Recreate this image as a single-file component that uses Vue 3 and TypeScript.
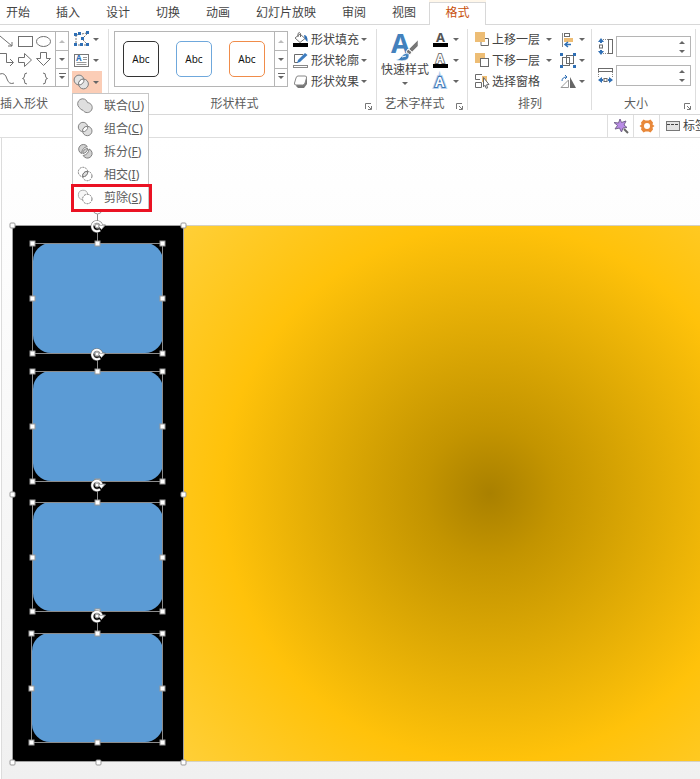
<script setup lang="ts">
interface Frame { x: number; y: number; w: number; h: number }

const tabs = ['开始', '插入', '设计', '切换', '动画', '幻灯片放映', '审阅', '视图', '格式']
const activeTab = '格式'

const styleColors = ['#333333', '#6fa8dc', '#f08c4a']

const fillTools = [
  { icon: 'fill', label: '形状填充' },
  { icon: 'outline', label: '形状轮廓' },
  { icon: 'effect', label: '形状效果' },
]

const textTools = [
  { icon: 'textFill', label: '文本填充' },
  { icon: 'textOutline', label: '文本轮廓' },
  { icon: 'textEffect', label: '文本效果' },
]

const layerTools = [
  { icon: 'forward', label: '上移一层', arrow: true },
  { icon: 'backward', label: '下移一层', arrow: true },
  { icon: 'pane', label: '选择窗格', arrow: false },
]

const arrangeTools = [
  { icon: 'align', label: '对齐' },
  { icon: 'group', label: '组合对象' },
  { icon: 'rotate', label: '旋转' },
]

const mergeItems = [
  { icon: 'union', label: '联合', key: 'U' },
  { icon: 'combine', label: '组合', key: 'C' },
  { icon: 'fragment', label: '拆分', key: 'F' },
  { icon: 'intersect', label: '相交', key: 'I' },
  { icon: 'subtract', label: '剪除', key: 'S' },
]

const frames: Frame[] = [
  { x: 33, y: 18, w: 130, h: 110 },
  { x: 33, y: 146, w: 130, h: 110 },
  { x: 33, y: 277, w: 130, h: 109 },
  { x: 32, y: 408, w: 131, h: 109 },
]
const outer: Frame = { x: 13, y: 0, w: 171, h: 537 }

function handles(f: Frame): [number, number][] {
  const xs = [f.x, f.x + Math.ceil(f.w / 2), f.x + f.w]
  const ys = [f.y, f.y + Math.ceil(f.h / 2), f.y + f.h]
  const points: [number, number][] = []
  ys.forEach((y, r) => xs.forEach((x, c) => { if (r !== 1 || c !== 1) points.push([x, y]) }))
  return points
}

const g = 'fill="none" stroke="#6b6b6b"'
const icons: Record<string, string> = {
  edit: `<path d="M3 4 14 2M3 4v10h12L9 8l5-5" fill="none" stroke="#777" stroke-dasharray="2 1"/><g fill="#2f6fb5"><rect x="1" y="2" width="3" height="3"/><rect x="5" y="1" width="3" height="3"/><rect x="13" y="0" width="3" height="3"/><rect x="8" y="6" width="3" height="3"/><rect x="1" y="12" width="3" height="3"/><rect x="7" y="12" width="3" height="3"/><rect x="13" y="12" width="3" height="3"/></g>`,
  textbox: `<rect x="1.500" y="2.500" width="14" height="12" fill="#fff" stroke="#777"/><text x="3" y="9" font-size="8" font-weight="700" fill="#2f6fb5">A</text><path d="M10 5.500h4M10 7.500h4M3.500 10.500h10M3.500 12.500h10" stroke="#999"/>`,
  merge: `<circle cx="6" cy="6" r="4.900" fill="#e3e3e3" stroke="#7d7d7d"/><circle cx="10.500" cy="10" r="4.900" fill="#e3e3e3" stroke="#7d7d7d"/><path d="M5.600 10.900A4.900 4.900 0 0 1 10.900 5.100A4.900 4.900 0 0 1 5.600 10.900Z" fill="#fff" stroke="#7d7d7d"/>`,
  union: `<path d="M2.400 9.600A5 5 0 1 1 10.500 4.600A5 5 0 1 1 6 12.300A5 5 0 0 1 2.400 9.600Z" fill="#dedede" stroke="#858585"/>`,
  combine: `<circle cx="6" cy="6" r="4.700" fill="#dedede" stroke="#858585"/><circle cx="10.300" cy="10" r="4.700" fill="#dedede" stroke="#858585"/><path d="M5.600 10.700A4.700 4.700 0 0 1 10.700 5.400A4.700 4.700 0 0 1 5.600 10.700Z" fill="#fff" stroke="#858585"/>`,
  fragment: `<path d="M4.500 10.500A4.700 4.700 0 1 1 10.300 3.600Q5.200 4.500 4.500 10.500ZM12 6A4.700 4.700 0 1 1 6.200 12.500Q11.500 11.500 12 6Z" fill="#d2d2d2" stroke="#808080"/><path d="M5.800 10.600Q5.600 6.500 10.600 5.300Q10.600 9.500 5.800 10.600Z" fill="#d2d2d2" stroke="#808080"/>`,
  intersect: `<circle cx="6" cy="6" r="4.700" fill="none" stroke="#777" stroke-dasharray="2 1"/><circle cx="10.300" cy="10" r="4.700" fill="none" stroke="#777" stroke-dasharray="2 1"/><path d="M5.600 10.700A4.700 4.700 0 0 1 10.700 5.400A4.700 4.700 0 0 1 5.600 10.700Z" fill="#ddd" stroke="#777"/>`,
  subtract: `<path d="M5.500 10.600A4.700 4.700 0 1 1 10.700 5.300" fill="#f6f6f6" stroke="#b0b0b0"/><circle cx="10.300" cy="10" r="4.700" fill="#fff" stroke="#777" stroke-dasharray="2 1"/>`,
  fill: `<path d="m2 6 5-4 5 4.500-5 4Z" fill="#fff" stroke="#777"/><path d="M5 5V1.500q1.500-2 2.500 0V5" ${g}/><path d="M11 3q4 0 3.500 7-2-1-3-4.500Z" fill="#2f6fb5"/><rect y="11" width="15" height="4" fill="#000"/>`,
  outline: `<path d="M10 1.500H1.500v8H5" ${g}/><path d="m4 10 1-3 7-7 2.500 2-7.500 7Z" fill="#3d7cbf"/><rect x=".5" y="12.500" width="14" height="2" fill="#fff" stroke="#888"/>`,
  effect: `<path d="M3 12 7 3h6l1 2v5l-3 4H5Z" fill="#777"/><path d="M5 2h7q2 0 1.500 2L12 9q-.5 2-2.500 2H3Q1 11 1.500 9L3 4q.5-2 2-2Z" fill="#fff" stroke="#888"/>`,
  quick: `<text x="0" y="20" font-size="27" font-weight="700" fill="#4381bd">A</text><path d="M27 7v6l-6 6-3-3Z" fill="#777" stroke="#fff" stroke-width=".5"/><path d="m17 16 4 3-2 3-4-3Z" fill="#777" stroke="#fff"/><path d="M5 27q4-1 6-4 3-4 7-2 1 9-13 6Z" fill="#3f80bd" stroke="#fff" stroke-width=".5"/><path d="m11 24 4-1" stroke="#fff"/>`,
  textFill: `<text x="3" y="10" font-size="13" font-weight="700" fill="#555">A</text><rect y="11" width="15" height="4" fill="#000"/>`,
  textOutline: `<text x="3" y="10" font-size="12" font-weight="600" fill="#fff" stroke="#777" stroke-width="2" paint-order="stroke">A</text><rect y="11" width="15" height="4" fill="#000"/>`,
  textEffect: `<text x="2" y="13" font-size="14" font-weight="600" fill="#fff" stroke="#b7d2f0" stroke-width="4" paint-order="stroke">A</text><text x="2" y="13" font-size="14" font-weight="600" fill="#fff" stroke="#3f79b7" stroke-width="2" paint-order="stroke">A</text>`,
  forward: `<path d="M10 6.500h3.500v7H6V10" ${g}/><rect width="10" height="10" fill="#edbd75"/>`,
  backward: `<rect width="10" height="10" fill="#edbd75"/><rect x="5.500" y="5.500" width="8" height="8" fill="#fff" stroke="#6b6b6b"/>`,
  pane: `<path d="M7 .5H.5v5H5M.5 8.500h6v5h-6Z" ${g}/><path d="M7 2h5v6H7Z" fill="#edbd75"/><path d="m8.500 3.500 5.500 7-2.500.3 1.200 3-1.500.5-1.200-3-1.500 1.500Z" fill="#fff" stroke="#666"/>`,
  align: `<path d="M2.500 1v14" stroke="#888"/><rect x="4.500" y="1.500" width="5" height="3" ${g}/><rect x="4" y="6" width="9" height="4" fill="#edbd75"/><path d="M11 12.500H6M8 10l-3 2.500L8 15" fill="none" stroke="#2f6fb5" stroke-width="1.500"/>`,
  group: `<g ${g}><rect x="2.500" y="4.500" width="7" height="8"/><rect x="6.500" y="2.500" width="7" height="8"/></g><path d="M0 0h3v3H0ZM13 0h3v3h-3ZM0 12h3v3H0ZM13 12h3v3h-3Z" fill="#2f6fb5"/>`,
  rotate: `<path d="M1 13.500h7.500V6Z" fill="#fff" stroke="#999"/><path d="M10 14V3l6 11Z" fill="#666"/><path d="M2 7q0-4 5-4M5 1l2 2-2 2" fill="none" stroke="#2f6fb5"/>`,
  height: `<rect x="11.500" y="1.500" width="4" height="14" ${g}/><path d="M6 1.500h5M6 15.500h5" stroke="#888" stroke-dasharray="1 1"/><path d="m4 0 3 4H5v1H3V4H1ZM4 17l3-4H5v-1H3v1H1Z" fill="#2f6fb5"/><rect x="2.500" y="7" width="3" height="3" ${g}/>`,
  width: `<rect x="1.500" y="1.500" width="14" height="3" ${g}/><path d="M1.500 5v5M15.500 5v5" stroke="#888" stroke-dasharray="1 1"/><path d="m1 13 4-3v2h1v2H5v2ZM16 13l-4-3v2h-1v2h1v2Z" fill="#2f6fb5"/><rect x="7" y="11.500" width="3" height="3" ${g}/>`,
  wand: `<path d="m7 1 1.500 3.500L13 3l-2 4 3 2.500-4 .5-1.500 4L6.500 10 2 11l2.500-3.500L1 4.500l4.500.5Z" fill="#b98be6" stroke="#75638c"/><path d="m11 11 4 4" stroke="#666" stroke-width="2"/>`,
  gear: `<path d="m4.500 1.500 2 1h3l2-1 2.500 3-.5 2L15.500 8l-2 1.500.5 2-2.500 3-2-1h-3l-2 1-2.500-3 .5-2L.5 8l2-1.500-.5-2Z" fill="#e8883a"/><circle cx="8" cy="8" r="3" fill="#fff"/>`,
  label: `<rect x="1.500" y="3.500" width="13" height="9" fill="#e4e4e4" stroke="#777"/><path d="M2 6.500h12" stroke="#444" stroke-dasharray="3 1"/>`,
}
</script>

<template>
  <div class="app">
    <nav class="tabs">
      <a v-for="t in tabs" :key="t" href="#" class="tab" :class="{ active: t === activeTab }">{{ t }}</a>
    </nav>

    <header class="ribbon">
      <section class="panel insert">
        <div class="body">
          <div class="gallery shapes">
            <svg class="shape-grid" viewBox="0 0 55 54" fill="none" stroke="#707070">
              <path d="M0 4 12 14M12 10v4H8" />
              <rect x="18.500" y="4.500" width="14" height="10" />
              <ellipse cx="43.500" cy="9.500" rx="7" ry="5" />
              <path d="M0 21.500h6.500v9H13M10 27l3.500 3.500L10 34" />
              <path d="M18.500 25.500h6v-4l7 6.500-7 6.500v-4h-6ZM40.500 20.500h6v6h4l-7 7-7-7h4Z" />
              <path d="M0 42q5-2 7 5 2 6 7 4" />
              <path d="M27 41q-3 0-2.500 3 0 2-2 2.500 2 0 2 2.500-.5 3 2.500 3M43 41q3 0 2.500 3 0 2 2 2.500-2 0-2 2.500.5 3-2.500 3" />
            </svg>
            <div class="scroller">
              <button aria-label="向上"><i class="up" /></button>
              <button aria-label="向下"><i class="down" /></button>
              <button aria-label="更多"><i class="down more" /></button>
            </div>
          </div>
          <div class="stack edit-tools">
            <button class="tool" aria-label="编辑形状"><svg class="icon" viewBox="0 0 17 17" v-html="icons.edit" /><i class="down" /></button>
            <button class="tool" aria-label="文本框"><svg class="icon" viewBox="0 0 17 17" v-html="icons.textbox" /><i class="down" /></button>
            <div class="merge">
              <button class="tool open" aria-label="合并形状" aria-expanded="true"><svg class="icon" viewBox="0 0 17 17" v-html="icons.merge" /><i class="down" /></button>
              <div class="menu" role="menu">
                <button v-for="m in mergeItems" :key="m.key" class="item" :class="{ marked: m.key === 'S' }" role="menuitem">
                  <svg class="icon" viewBox="0 0 17 17" v-html="icons[m.icon]" />
                  <span>{{ m.label }}(<u>{{ m.key }}</u>)</span>
                </button>
              </div>
            </div>
          </div>
        </div>
        <h2 class="caption">插入形状</h2>
      </section>

      <section class="panel styles">
        <div class="body">
          <div class="gallery presets">
            <div class="swatches">
              <button v-for="c in styleColors" :key="c" class="swatch" :style="{ borderColor: c }">Abc</button>
            </div>
            <div class="scroller">
              <button aria-label="向上"><i class="up" /></button>
              <button aria-label="向下"><i class="down" /></button>
              <button aria-label="更多"><i class="down more" /></button>
            </div>
          </div>
          <div class="stack">
            <button v-for="t in fillTools" :key="t.icon" class="tool shape-tool">
              <svg class="icon small" viewBox="0 0 16 16" v-html="icons[t.icon]" /><span>{{ t.label }}</span><i class="down" />
            </button>
          </div>
        </div>
        <h2 class="caption">形状样式</h2>
        <button class="launcher" aria-label="形状样式选项"><svg viewBox="0 0 7 7" fill="none" stroke="#777"><path d="M6 .5H.5V6M3 3l3 3M6.500 3v3.500H3" /></svg></button>
      </section>

      <section class="panel wordart">
        <div class="body">
          <button class="quick">
            <svg class="quick-icon" viewBox="0 0 28 29" v-html="icons.quick" />
            <span>快速样式</span>
            <i class="down" />
          </button>
          <div class="stack">
            <button v-for="t in textTools" :key="t.icon" class="tool spaced" :aria-label="t.label">
              <svg class="icon small" viewBox="0 0 16 16" v-html="icons[t.icon]" /><i class="down" />
            </button>
          </div>
        </div>
        <h2 class="caption">艺术字样式</h2>
        <button class="launcher" aria-label="艺术字样式选项"><svg viewBox="0 0 7 7" fill="none" stroke="#777"><path d="M6 .5H.5V6M3 3l3 3M6.500 3v3.500H3" /></svg></button>
      </section>

      <section class="panel arrange">
        <div class="body">
          <div class="stack">
            <button v-for="t in layerTools" :key="t.icon" class="tool layer">
              <svg class="icon small" viewBox="0 0 16 16" v-html="icons[t.icon]" /><span>{{ t.label }}</span><i v-if="t.arrow" class="down" />
            </button>
          </div>
          <div class="stack">
            <button v-for="t in arrangeTools" :key="t.icon" class="tool" :aria-label="t.label">
              <svg class="icon small" viewBox="0 0 16 16" v-html="icons[t.icon]" /><i class="down" />
            </button>
          </div>
        </div>
        <h2 class="caption">排列</h2>
      </section>

      <section class="panel size">
        <div class="body">
          <label class="field">
            <svg class="icon" viewBox="0 0 17 17" v-html="icons.height" />
            <span class="spin"><input type="text" aria-label="高度"><span class="steps"><i class="up dark" /><i class="down" /></span></span>
          </label>
          <label class="field">
            <svg class="icon" viewBox="0 0 17 17" v-html="icons.width" />
            <span class="spin"><input type="text" aria-label="宽度"><span class="steps"><i class="up dark" /><i class="down" /></span></span>
          </label>
        </div>
        <h2 class="caption">大小</h2>
        <button class="launcher" aria-label="大小选项"><svg viewBox="0 0 7 7" fill="none" stroke="#777"><path d="M6 .5H.5V6M3 3l3 3M6.500 3v3.500H3" /></svg></button>
      </section>
    </header>

    <div class="quickbar">
      <button class="quick-cell" aria-label="美化"><svg class="icon small" viewBox="0 0 16 16" v-html="icons.wand" /></button>
      <button class="quick-cell" aria-label="设置"><svg class="icon small" viewBox="0 0 16 16" v-html="icons.gear" /></button>
      <button class="quick-cell wide"><svg class="icon small" viewBox="0 0 16 16" v-html="icons.label" /><span>标签</span></button>
    </div>

    <main class="stage">
      <div class="slide">
        <div class="film" />
        <div class="backdrop" />
        <svg class="selection" viewBox="0 -20 200 567" fill="none">
          <rect v-for="f in frames" :key="f.y" :x="f.x" :y="f.y" :width="f.w" :height="f.h" rx="18" fill="#5b9bd5" />
          <g stroke="#8c8c8c">
            <rect v-for="f in frames" :key="f.y" :x="f.x - 0.5" :y="f.y + 0.5" :width="f.w" :height="f.h" />
            <rect :x="outer.x - 0.5" :y="outer.y + 0.5" :width="outer.w" :height="outer.h - 1" stroke="#a0a0a0" />
            <path d="M97.500-12V0" />
            <path v-for="f in frames" :key="f.h + f.y" :d="`M97.500 ${f.y - 12}v10`" />
          </g>
          <circle cx="97.500" cy="-15" r="4" fill="#fff" stroke="#999" />
          <g fill="#fff" stroke="#999">
            <rect v-for="([x, y], i) in handles(outer)" :key="i" :x="x - 3" :y="y - 2" width="5" height="5" rx="1" />
            <template v-for="f in frames" :key="f.y">
              <rect v-for="([x, y], i) in handles(f)" :key="i" :x="x - 3" :y="y - 2" width="5" height="5" />
            </template>
          </g>
          <g v-for="f in frames" :key="f.y" :transform="`translate(97 ${f.y - 17})`">
            <path d="M3 4.200A4.800 4.800 0 1 1 4.500 -1" stroke="#777" stroke-width="3" />
            <path d="M0-1H8.500L4.500 3.500Z" fill="#fff" stroke="#777" />
            <path d="M3 4.200A4.800 4.800 0 1 1 4.500 -1" stroke="#fff" stroke-width="2" />
            <circle r="2" fill="#fff" stroke="#999" />
          </g>
        </svg>
      </div>
    </main>
  </div>
</template>

<style>
body { margin: 0; }
</style>

<style scoped>
.app {
  min-height: 100vh;
  display: flex;
  flex-direction: column;
  overflow: hidden;
  background: #fff;
  color: #444;
  font: 12px/16px "Noto Sans", "Noto Sans CJK SC", sans-serif;
}
* { box-sizing: border-box; }
button, input { font: inherit; color: inherit; border: 0; padding: 0; background: none; }
svg { display: block; flex: none; overflow: visible; }

.tabs { display: flex; height: 25px; padding-top: 2px; border-bottom: 1px solid #d8d8d8; }
.tab { padding: 3px 13px 0; height: 23px; color: #444; text-decoration: none; white-space: nowrap; }
.tab:first-child { padding-left: 6px; }
.tab.active { width: 57px; text-align: center; padding: 2px 0 0; color: #c8500a; background: #fff; border: 1px solid #d8d8d8; border-bottom: 0; box-shadow: 0 -2px #fff7ea; }

.ribbon { display: flex; height: 90px; border-bottom: 1px solid #d8d8d8; }
.panel { position: relative; display: flex; flex-direction: column; flex: none; }
.panel::after { content: ""; position: absolute; right: 0; top: 4px; bottom: 4px; width: 1px; background: #dedede; }
.body { display: flex; height: 70px; padding-top: 4px; }
.caption { margin: 0; font-size: 12px; font-weight: 400; line-height: 17px; text-align: center; color: #5c5c5c; }
.launcher { position: absolute; right: 5px; bottom: 4px; width: 7px; height: 7px; }
.launcher svg { width: 7px; height: 7px; }

.stack { display: flex; flex-direction: column; }
.tool { display: flex; align-items: center; gap: 3px; height: 21px; white-space: nowrap; }
.icon { width: 17px; height: 17px; }
.icon.small { width: 16px; height: 16px; }

.up, .down { flex: none; width: 0; height: 0; border: 3px solid transparent; border-bottom-width: 0; border-top-color: #666; }
.up { border-width: 0 3px 3px; border-bottom-color: #bbb; }
.up.dark { border-bottom-color: #666; }
.more { position: relative; }
.more::before { content: ""; position: absolute; left: -3px; top: -6px; width: 7px; height: 1px; background: #666; }

.gallery { display: flex; height: 56px; margin-top: 2px; border: 1px solid #b5b5b5; }
.scroller { display: grid; grid-template-rows: 1fr 1fr 1fr; width: 13px; border-left: 1px solid #b5b5b5; }
.scroller button { display: grid; place-items: center; }
.scroller button + button { border-top: 1px solid #b5b5b5; }

.insert { width: 109px; }
.insert .body { gap: 3px; }
.insert .caption { text-align: left; }
.shapes { width: 69px; border-left: 0; }
.shape-grid { width: 55px; height: 54px; }
.edit-tools { width: 30px; }
.edit-tools .tool { width: 30px; padding-left: 1px; }
.merge { position: relative; }
.merge .open { height: 22px; background: #fbcdb6; }
.menu { position: absolute; z-index: 2; top: 22px; left: 0; width: 77px; height: 117px; display: flex; flex-direction: column; padding-top: 1px; background: #fff; border: 1px solid #c6c6c6; }
.item { position: relative; flex: 1; display: flex; align-items: center; gap: 10px; padding-left: 4px; color: #5c5c5c; white-space: nowrap; }
.marked::after { content: ""; position: absolute; inset: -2px -4px -3px -2px; border: 3px solid #ea1223; }

.styles { width: 268px; }
.styles .body { gap: 5px; padding-left: 5px; }
.styles .caption { padding-right: 17px; }
.shape-tool { gap: 2px; }
.presets { width: 174px; }
.swatches { flex: 1; display: flex; align-items: center; gap: 17px; padding-left: 8px; }
.swatch { width: 36px; height: 36px; border: 1px solid; border-radius: 5px; background: #fff; color: #111; font-size: 10px; }

.wordart { width: 91px; }
.wordart .body { gap: 4px; padding-left: 4px; }
.wordart .caption { padding-right: 16px; }
.quick { display: flex; flex-direction: column; align-items: center; width: 48px; height: 60px; padding-top: 4px; white-space: nowrap; }
.quick-icon { width: 28px; height: 29px; }
.quick .down { margin-top: 4px; }
.spaced { gap: 4px; }

.arrange { width: 124px; }
.arrange .body { gap: 8px; padding-left: 7px; }
.layer { gap: 1px; width: 77px; }
.layer .down { margin-left: auto; }

.size { width: 104px; }
.size .body { flex-direction: column; gap: 8px; padding: 11px 5px 0 5px; }
.size .caption { padding-right: 16px; }
.field { display: flex; align-items: center; gap: 2px; }
.spin { flex: 1; min-width: 0; display: flex; height: 21px; border: 1px solid #b5b5b5; }
.spin input { flex: 1; width: 0; min-width: 0; outline: 0; }
.steps { flex: none; display: flex; flex-direction: column; justify-content: center; gap: 6px; width: 11px; }

.quickbar { display: flex; justify-content: flex-end; height: 23px; border-bottom: 1px solid #dedede; }
.quick-cell { display: flex; align-items: center; justify-content: center; width: 26px; border-left: 1px solid #dedede; }
.quick-cell.wide { width: 41px; gap: 2px; padding-left: 5px; justify-content: flex-start; overflow: hidden; white-space: nowrap; }

.stage { flex: 1; display: flex; padding: 87px 0 17px 11px; margin-left: 1px; border-left: 1px solid #dcdcdc; background: linear-gradient(#fff, #fdfdfd 15%, #f0f0f0); }
.slide { position: relative; flex: 1; display: flex; min-height: 537px; }
.film { width: 171px; background: #000; }
.backdrop { flex: 1; border-top: 1px solid #d5d1c2; border-bottom: 1px solid #d5d1c2; background: radial-gradient(circle 547px at 306px 50%, #a98000 0, #c39400 12%, #dba704 27%, #ffc20a 49%, #ffd03a 76%, #ffda60 100%); }
.selection { position: absolute; left: -13px; top: -20px; width: 200px; height: 567px; }
</style>
